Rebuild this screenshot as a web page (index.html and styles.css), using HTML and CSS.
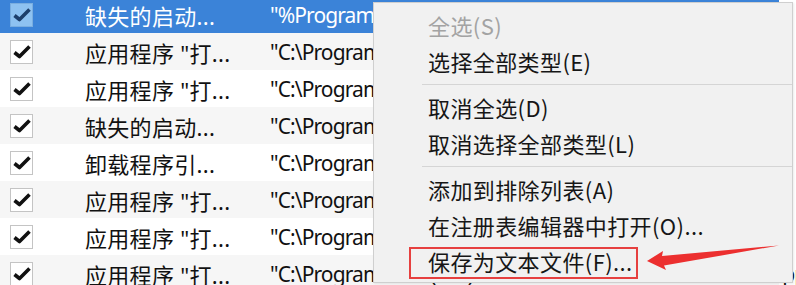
FILE: index.html
```html
<!DOCTYPE html>
<html lang="zh-CN">
<head>
<meta charset="utf-8">
<title>Context menu</title>
<link rel="stylesheet" href="styles.css">
</head>
<body>
<div class="screen">
  <div class="list">
    <div class="row selected">
      <span class="cb"><svg viewBox="0 0 23 24" width="23" height="24"><path d="M4.5 12.5 L9.5 16.5 L19.5 6.5" fill="none" stroke="#1d3f6b" stroke-width="3.6" stroke-linejoin="round"/></svg></span>
      <span class="c1">缺失的启动...</span>
      <span class="c2">"%ProgramFiles%\Common Files\Microsoft Shared\ClickToRun"</span>
    </div>
    <div class="row alt">
      <span class="cb"><svg viewBox="0 0 23 24" width="23" height="24"><path d="M4.5 12.5 L9.5 16.5 L19.5 6.5" fill="none" stroke="#111" stroke-width="3.6" stroke-linejoin="round"/></svg></span>
      <span class="c1">应用程序 "打...</span>
      <span class="c2">"C:\Program Files (x86)\Common Files\Adobe\OOBE"</span>
    </div>
    <div class="row">
      <span class="cb"><svg viewBox="0 0 23 24" width="23" height="24"><path d="M4.5 12.5 L9.5 16.5 L19.5 6.5" fill="none" stroke="#111" stroke-width="3.6" stroke-linejoin="round"/></svg></span>
      <span class="c1">应用程序 "打...</span>
      <span class="c2">"C:\Program Files (x86)\Common Files\Adobe\OOBE"</span>
    </div>
    <div class="row alt">
      <span class="cb"><svg viewBox="0 0 23 24" width="23" height="24"><path d="M4.5 12.5 L9.5 16.5 L19.5 6.5" fill="none" stroke="#111" stroke-width="3.6" stroke-linejoin="round"/></svg></span>
      <span class="c1">缺失的启动...</span>
      <span class="c2">"C:\Program Files\Common Files\Microsoft Shared"</span>
    </div>
    <div class="row">
      <span class="cb"><svg viewBox="0 0 23 24" width="23" height="24"><path d="M4.5 12.5 L9.5 16.5 L19.5 6.5" fill="none" stroke="#111" stroke-width="3.6" stroke-linejoin="round"/></svg></span>
      <span class="c1">卸载程序引...</span>
      <span class="c2">"C:\Program Files\Uninstall Information\setup.exe"</span>
    </div>
    <div class="row alt">
      <span class="cb"><svg viewBox="0 0 23 24" width="23" height="24"><path d="M4.5 12.5 L9.5 16.5 L19.5 6.5" fill="none" stroke="#111" stroke-width="3.6" stroke-linejoin="round"/></svg></span>
      <span class="c1">应用程序 "打...</span>
      <span class="c2">"C:\Program Files (x86)\Common Files\Adobe\OOBE"</span>
    </div>
    <div class="row">
      <span class="cb"><svg viewBox="0 0 23 24" width="23" height="24"><path d="M4.5 12.5 L9.5 16.5 L19.5 6.5" fill="none" stroke="#111" stroke-width="3.6" stroke-linejoin="round"/></svg></span>
      <span class="c1">应用程序 "打...</span>
      <span class="c2">"C:\Program Files (x86)\Common Files\Adobe\OOBE"</span>
    </div>
    <div class="row alt">
      <span class="cb"><svg viewBox="0 0 23 24" width="23" height="24"><path d="M4.5 12.5 L9.5 16.5 L19.5 6.5" fill="none" stroke="#111" stroke-width="3.6" stroke-linejoin="round"/></svg></span>
      <span class="c1">应用程序 "打...</span>
      <span class="c2">"C:\Program Files (x86)\Common Files\Adobe\OOBE\PDApp\core\PDApp.exe"</span>
    </div>
  </div>

  <div class="menu">
    <div class="item disabled">全选(S)</div>
    <div class="item">选择全部类型(E)</div>
    <div class="sep"></div>
    <div class="item">取消全选(D)</div>
    <div class="item">取消选择全部类型(L)</div>
    <div class="sep"></div>
    <div class="item">添加到排除列表(A)</div>
    <div class="item">在注册表编辑器中打开(O)...</div>
    <div class="item">保存为文本文件(F)...</div>
  </div>

  <div class="highlight"></div>
  <svg class="arrow" width="796" height="285" viewBox="0 0 796 285">
    <polygon points="647,261 663,251 662,256 779,245.5 664,265.5 666,270" fill="#ec2f2f"/>
  </svg>
</div>
</body>
</html>
```

FILE: styles.css
```css
html, body {
  margin: 0;
  padding: 0;
  background: #ffffff;
}

.screen {
  position: relative;
  width: 796px;
  height: 285px;
  overflow: hidden;
  font-family: "Noto Sans", "Noto Sans CJK SC", sans-serif;
  font-size: 22px;
  color: #111111;
}

.list {
  display: flex;
  flex-direction: column;
  margin-top: -4px;
  width: 779px;
}

.row {
  display: flex;
  align-items: center;
  height: 37px;
  background: #ffffff;
  white-space: nowrap;
}

.row.alt {
  background: #f6f6f6;
}

.row.selected {
  background: #3b83d8;
  color: #ffffff;
}

.cb {
  flex: none;
  width: 21px;
  height: 22px;
  margin-left: 10px;
  border: 1px solid #c4c4c4;
  background: #ffffff;
  position: relative;
  overflow: hidden;
}

.cb svg {
  display: block;
  margin: -1px 0 0 -1px;
}

.row.selected .cb {
  background: #8ec2f1;
  border-color: #7aaee0;
}

.c1 {
  flex: none;
  width: 185px;
  margin-left: 52px;
  letter-spacing: 0.3px;
}

.c2 {
  flex: none;
  font-size: 21px;
  letter-spacing: -0.9px;
}

.menu {
  position: absolute;
  left: 373px;
  top: 2px;
  width: 418px;
  padding: 4px 0 3px;
  background: #f1f1f1;
  border: 1px solid #cfcfcf;
  box-shadow: 1px 1px 2px rgba(0, 0, 0, 0.08);
  display: flex;
  flex-direction: column;
  font-family: "Noto Sans CJK SC", sans-serif;
  letter-spacing: 0.4px;
}

.item {
  height: 36px;
  line-height: 36px;
  padding-left: 54px;
  color: #161616;
  white-space: nowrap;
}

.item.disabled {
  color: #a3a3a3;
}

.sep {
  height: 10px;
  margin-left: 48px;
  display: flex;
  align-items: center;
}

.sep::before {
  content: "";
  display: block;
  width: 100%;
  height: 1px;
  background: #d5d5d5;
}

.highlight {
  position: absolute;
  left: 409px;
  top: 247px;
  width: 225px;
  height: 28px;
  border: 2px solid #e6403f;
}

.arrow {
  position: absolute;
  left: 0;
  top: 0;
  pointer-events: none;
}
```
